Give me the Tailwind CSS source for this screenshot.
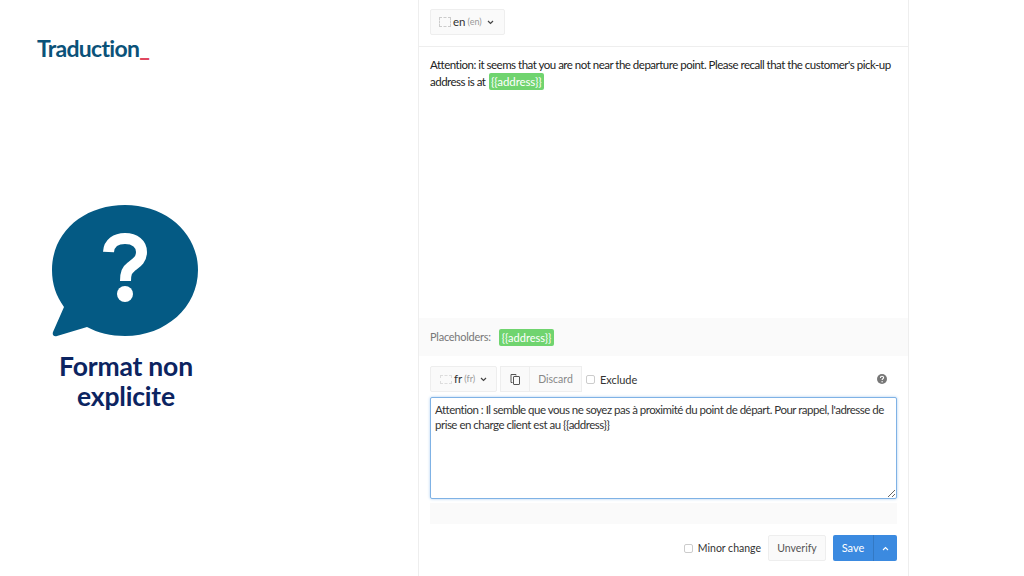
<!DOCTYPE html>
<html lang="en">
<head>
  <meta charset="UTF-8" />
  <title>Traduction</title>
  <script src="https://cdn.jsdelivr.net/npm/@tailwindcss/browser@4"></script>
</head>
<body class="bg-white font-['Lato',sans-serif] overflow-hidden">
  <div class="flex w-[1024px] h-[576px] overflow-hidden">

    <!-- Left column -->
    <div class="w-[418px] shrink-0 flex flex-col">
      <div class="pl-[37px] pt-[34px] h-[204px] text-[23px] leading-[28px] font-bold tracking-[-0.7px] text-[#0b5279]">Traduction<span class="font-black text-[#e0475f]">_</span></div>
      <div class="pl-[51px]">
        <svg width="148" height="133" viewBox="0 0 148 133">
          <path fill="#045a84" d="M74 1C33 1 1 28 1 66c0 14 4 26 12 37L2 128c-1 3 1 5 4 4l30-9c11 6 24 9 38 9 41 0 73-29 73-66S115 1 74 1z"/>
          <path fill="none" stroke="#fff" stroke-width="11" d="M57.500 48C58 39 65 34.500 74 34.500C84 34.500 90.500 40 90.500 48C90.500 56 85 59 80 63C76 66 74.500 69 74.500 77"/>
          <circle cx="74" cy="90" r="8" fill="#fff"/>
        </svg>
        <div class="w-[150px] mt-[14px] text-center text-[26.500px] leading-[30px] font-bold tracking-[-0.2px] text-[#0c2461]">Format non explicite</div>
      </div>
    </div>

    <!-- Translation panel -->
    <div class="w-[491px] shrink-0 h-[576px] border-x border-[#eeeeee] flex flex-col text-[#333]">
      <div class="h-[47px] px-[11px] pt-[9px] border-b border-[#eeeeee]">
        <div class="w-[75px] h-[26px] flex items-center pl-[8px] gap-[2px] bg-[#fafafa] border border-[#eeeeee] rounded-[2px] text-[11.500px]">
          <span class="w-[12px] h-[10px] border border-dashed border-[#ccc]"></span>
          <span>en</span> <span class="text-[9px] text-[#999]">(en)</span>
          <svg class="ml-[3px]" width="7" height="5" viewBox="0 0 7 5"><path d="M1 1l2.500 2.500L6 1" fill="none" stroke="#444" stroke-width="1.200"/></svg>
        </div>
      </div>

      <div class="h-[271px] px-[11px] pt-[10px] text-[11.500px] leading-[16px] tracking-[-0.5px] whitespace-nowrap text-[#222]">
        <div>Attention: it seems that you are not near the departure point. Please recall that the customer's pick-up</div>
        <div>address is at <span class="inline-block h-[17px] leading-[17px] px-[2px] ml-[1px] bg-[#70d46f] rounded-[2px] text-white tracking-[-0.1px]">{{address}}</span></div>
      </div>

      <div class="h-[38px] px-[11px] flex items-center gap-[8px] bg-[#fafafa] text-[11px] tracking-[-0.25px] text-[#777]">
        <span>Placeholders:</span>
        <span class="h-[17px] leading-[17px] px-[3px] bg-[#70d46f] rounded-[2px] text-white tracking-[0px]">{{address}}</span>
      </div>

      <div class="pt-[10px] pl-[11px] pr-[11px]">
        <div class="h-[26px] flex items-center">
          <div class="w-[67px] h-[26px] flex items-center pl-[9px] gap-[2px] bg-[#fafafa] border border-[#eeeeee] rounded-[2px] text-[11.500px]">
            <span class="w-[12px] h-[9px] border border-dashed border-[#ddd]"></span>
            <span>fr</span> <span class="text-[9px] text-[#999]">(fr)</span>
            <svg class="ml-[3px]" width="7" height="5" viewBox="0 0 7 5"><path d="M1 1l2.500 2.500L6 1" fill="none" stroke="#444" stroke-width="1.200"/></svg>
          </div>
          <div class="ml-[3px] w-[30px] h-[26px] flex items-center justify-center bg-[#fafafa] border border-[#eeeeee]">
            <svg width="11" height="11" viewBox="0 0 11 11" fill="none" stroke="#555" stroke-width="1"><path d="M2.500 8.500h-1.500v-8h5v1"/><rect x="3.500" y="2.500" width="6" height="8" rx="0.500"/></svg>
          </div>
          <div class="w-[52px] h-[26px] pt-[2px] flex items-center justify-center bg-[#fafafa] border border-l-0 border-[#eeeeee] text-[10.500px] text-[#888]">Discard</div>
          <span class="ml-[4px] w-[9px] h-[9px] border border-[#ccc] rounded-[2px]"></span>
          <span class="ml-[5px] mt-[3px] text-[11px] tracking-[-0.05px] text-[#333]">Exclude</span>
          <svg class="ml-auto mr-[10px] mb-[1px]" width="10" height="10" viewBox="0 0 10 10">
            <circle cx="5" cy="5" r="5" fill="#777"/>
            <path d="M3.400 3.900c0-1 .7-1.600 1.600-1.600s1.600.6 1.600 1.400c0 1.100-1.500 1.100-1.500 2.300" fill="none" stroke="#fff" stroke-width="1.100"/>
            <circle cx="5.100" cy="7.700" r=".7" fill="#fff"/>
          </svg>
        </div>
        <textarea class="block mt-[5px] w-[467px] h-[102px] px-[4px] py-[4px] bg-white border border-[#7fb2e5] rounded-[2px] shadow-[0_0_3px_#a9cdf0] outline-none text-[11.500px] leading-[15px] tracking-[-0.5px] text-[#333]">Attention : Il semble que vous ne soyez pas à proximité du point de départ. Pour rappel, l'adresse de prise en charge client est au {{address}}</textarea>
        <div class="mt-[4px] w-[467px] h-[21px] bg-[#fafafa]"></div>
        <div class="mt-[11px] w-[467px] h-[26px] flex items-center justify-end">
          <span class="w-[9px] h-[9px] border border-[#ccc] rounded-[2px]"></span>
          <span class="ml-[5px] mr-[7px] mt-[2px] text-[10.500px] tracking-[0px] text-[#333]">Minor change</span>
          <div class="w-[58px] h-[26px] pt-[1px] flex items-center justify-center bg-[#fafafa] border border-[#eeeeee] rounded-[2px] text-[10.500px] text-[#555]">Unverify</div>
          <div class="ml-[7px] w-[40px] h-[26px] flex items-center justify-center bg-[#3b8ae0] rounded-l-[2px] text-[11px] text-white">Save</div>
          <div class="w-[24px] h-[26px] flex items-center justify-center bg-[#3b8ae0] border-l border-[#3379c4] rounded-r-[2px]">
            <svg width="7" height="5" viewBox="0 0 7 5"><path d="M1 4l2.500-2.500L6 4" fill="none" stroke="#fff" stroke-width="1.100"/></svg>
          </div>
        </div>
      </div>
    </div>
  </div>
</body>
</html>
